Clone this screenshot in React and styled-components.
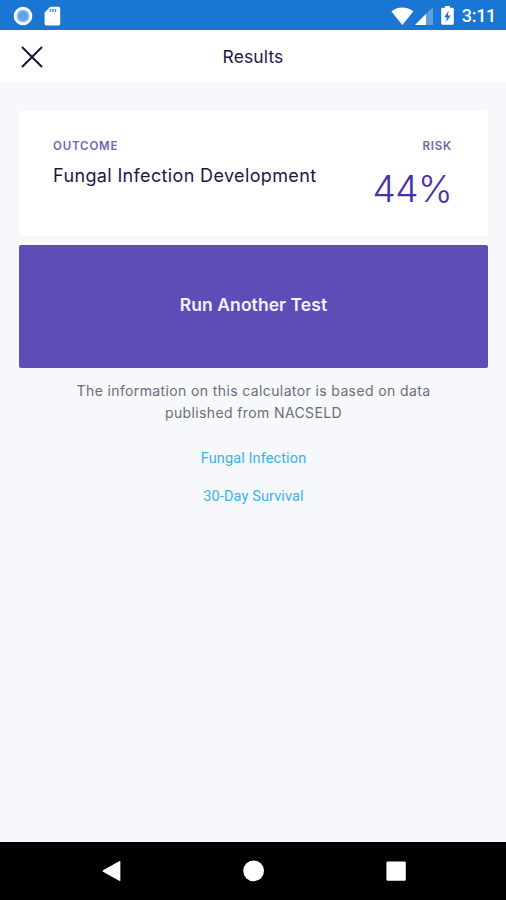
import React from 'react'
import styled, { createGlobalStyle } from 'styled-components'

const links = ['Fungal Infection', '30-Day Survival']

const App = () => {
    return (
        <Screen>
            <GlobalStyle />
            <StatusBar>
                <StatusGroup $gap="11px">
                    <svg width="20" height="20" viewBox="0 0 20 20">
                        <circle cx="10" cy="10" r="9.3" fill="#fff" />
                        <circle cx="10" cy="10" r="6.6" fill="#9cc6f3" />
                        <circle cx="10" cy="10" r="5" fill="#5fa2e6" />
                    </svg>
                    <svg width="17" height="20" viewBox="0 0 17 20">
                        <path d="M6.3 .8H14.6Q16.2.8 16.2 2.4V17.8Q16.2 19.4 14.6 19.4H2.2Q.6 19.4.6 17.8V6.5Z" fill="#fff" />
                        <path d="M6.5 3V6M9 3V6M11.5 3V6" stroke="#4a8fdb" strokeWidth="1.5" />
                    </svg>
                </StatusGroup>
                <StatusGroup>
                    <WifiIcon />
                    <SignalIcon />
                    <BatteryIcon />
                    <Clock>3:11</Clock>
                </StatusGroup>
            </StatusBar>

            <Header>
                <CloseButton aria-label="Close">
                    <svg width="22" height="22" viewBox="0 0 22 22">
                        <path d="M1 1L21 21M21 1L1 21" stroke="#1b1738" strokeWidth="2" />
                    </svg>
                </CloseButton>
                <Title>Results</Title>
            </Header>

            <Content>
                <Card>
                    <div>
                        <Label $spacing="0.85px">OUTCOME</Label>
                        <Outcome>Fungal Infection Development</Outcome>
                    </div>
                    <Risk>
                        <Label $spacing="0.8px">RISK</Label>
                        <Percent>44%</Percent>
                    </Risk>
                </Card>
                <RunButton>Run Another Test</RunButton>
                <Info>
                    The information on this calculator is based on data
                    <br />
                    published from NACSELD
                </Info>
                <Links>
                    {links.map((link) => (
                        <Link key={link}>{link}</Link>
                    ))}
                </Links>
            </Content>

            <NavBar>
                <svg width="20" height="22" viewBox="0 0 20 22">
                    <path d="M18.4 1.2V20.8Q18.2 21.3 17.6 21L1 11.8Q.3 11 1 10.3L17.6 1Q18.2.7 18.4 1.2Z" fill="#fff" />
                </svg>
                <svg width="22" height="22" viewBox="0 0 22 22">
                    <circle cx="10.6" cy="10.8" r="10.4" fill="#fff" />
                </svg>
                <svg width="20" height="20" viewBox="0 0 20 20">
                    <rect x=".4" y=".4" width="19.4" height="19.4" rx="1.4" fill="#fff" />
                </svg>
            </NavBar>
        </Screen>
    )
}

const WifiIcon = () => (
    <svg width="23" height="18" viewBox="0 0 23 18">
        <path d="M11.3 18L.4 4.4Q5 .4 11.3.4T22.3 4.4Z" fill="#fff" />
    </svg>
)

const SignalIcon = () => (
    <Signal width="18" height="18" viewBox="0 0 18 18">
        <path d="M18 0V18H0Z" fill="#fff" opacity=".3" />
        <path d="M11 7V18H0Z" fill="#fff" />
    </Signal>
)

const BatteryIcon = () => (
    <Battery width="13" height="19" viewBox="0 0 13 19">
        <path d="M4 0H9V1.8H11.5Q12.8 1.8 12.8 3V17.6Q12.8 18.8 11.5 18.8H1.5Q.2 18.8.2 17.6V3Q.2 1.8 1.5 1.8H4Z" fill="#fff" />
        <path d="M7.6 4.8L3.2 11.2H5.8L5.2 16L9.7 9.4H7Z" fill="#1976d2" />
    </Battery>
)

export default App

const GlobalStyle = createGlobalStyle`
  body {
    margin: 0;
    background: #f6f8fc;
  }

  svg {
    display: block;
    flex: none;
  }
`

const Screen = styled.div`
  display: flex;
  flex-direction: column;
  height: 900px;
  background: #f6f8fc;
  font-family: Inter, Roboto, sans-serif;
`

const StatusBar = styled.div`
  box-sizing: border-box;
  display: flex;
  justify-content: space-between;
  align-items: center;
  height: 30px;
  padding: 1px 10px 0 13px;
  background: #1976d2;
`

const StatusGroup = styled.div`
  display: flex;
  align-items: center;
  gap: ${({ $gap }) => $gap || '0'};
`

const Signal = styled.svg`
  margin-left: 1px;
`

const Battery = styled.svg`
  margin-left: 8px;
`

const Clock = styled.span`
  margin-left: 8px;
  font: 500 18px/28px Roboto, sans-serif;
  letter-spacing: -0.3px;
  color: #fff;
`

const Header = styled.header`
  display: grid;
  grid-template-columns: 64px 1fr 64px;
  align-items: center;
  height: 52px;
  background: #fff;
`

const CloseButton = styled.button`
  margin: 2px 0 0 21px;
  padding: 0;
  border: 0;
  background: none;
`

const Title = styled.h1`
  margin: 2px 0 0;
  font-size: 17.5px;
  font-weight: 400;
  line-height: 24px;
  letter-spacing: 0.1px;
  text-align: center;
  color: #1e1744;
`

const Content = styled.main`
  flex: 1;
  padding: 29px 18px 0 19px;
`

const Card = styled.section`
  box-sizing: border-box;
  display: flex;
  justify-content: space-between;
  height: 125px;
  padding: 27px 36px 0 34px;
  border-radius: 2px;
  background: #fff;
`

const Label = styled.div`
  font-size: 11.5px;
  font-weight: 600;
  line-height: 17px;
  letter-spacing: ${({ $spacing }) => $spacing};
  color: #686aae;
`

const Outcome = styled.div`
  margin-top: 9px;
  font-size: 18px;
  line-height: 24px;
  letter-spacing: 0.36px;
  color: #1e1744;
`

const Risk = styled.div`
  text-align: right;
`

const Percent = styled.div`
  margin-top: 11px;
  font-size: 37px;
  font-weight: 300;
  line-height: 46px;
  letter-spacing: -0.6px;
  color: #4a2fac;
`

const RunButton = styled.button`
  display: block;
  width: 100%;
  height: 123px;
  margin-top: 9px;
  padding: 0 0 4px;
  border: 0;
  border-radius: 2px;
  background: #5d4db6;
  font-family: inherit;
  font-size: 17.5px;
  font-weight: 600;
  letter-spacing: 0.07px;
  color: #f4f1ff;
`

const Info = styled.p`
  margin: 12px 0 0;
  font-size: 14px;
  line-height: 22px;
  letter-spacing: 0.38px;
  text-align: center;
  color: #6d6c7f;
`

const Links = styled.nav`
  display: flex;
  flex-direction: column;
  align-items: center;
  gap: 18px;
  margin-top: 25px;
`

const Link = styled.a`
  font-family: Roboto, sans-serif;
  font-size: 14.5px;
  line-height: 20px;
  letter-spacing: 0.12px;
  color: #38b2ee;
`

const NavBar = styled.footer`
  box-sizing: border-box;
  display: flex;
  justify-content: space-between;
  align-items: center;
  height: 58px;
  padding: 0 100px 0 102px;
  background: #000;
`
